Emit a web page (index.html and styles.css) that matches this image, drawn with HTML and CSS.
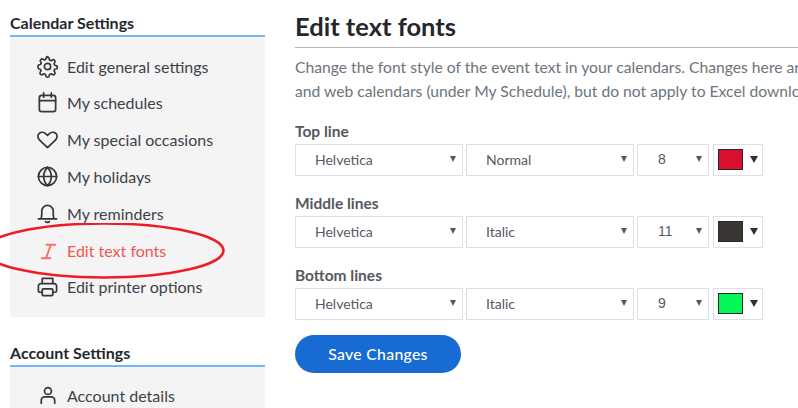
FILE: index.html
```html
<!DOCTYPE html>
<html lang="en">
<head>
<meta charset="utf-8">
<title>Edit text fonts</title>
<link rel="stylesheet" href="styles.css">
</head>
<body>
<div class="page">
  <aside class="sidebar">
    <h2 class="side-title">Calendar Settings</h2>
    <ul class="side-panel">
      <li class="side-item"><svg class="ico" viewBox="0 0 24 24"><path d="M12 2.5c1 0 1.600.4 1.800 1.300l.3 1.500 1.600.7 1.400-.8c.8-.5 1.500-.4 2.200.3.700.7.800 1.400.3 2.200l-.8 1.300.7 1.700 1.500.3c.9.2 1.300.8 1.300 1.800s-.4 1.600-1.300 1.800l-1.500.3-.7 1.700.8 1.300c.5.800.4 1.500-.3 2.200s-1.400.8-2.200.3l-1.400-.8-1.600.7-.3 1.500c-.2.900-.8 1.300-1.800 1.300s-1.600-.4-1.800-1.300l-.3-1.500-1.600-.7-1.400.8c-.8.500-1.500.4-2.200-.3s-.8-1.400-.3-2.200l.8-1.300-.7-1.700-1.500-.3C2.400 13.600 2 13 2 12s.4-1.600 1.300-1.800l1.500-.3.7-1.700-.8-1.300c-.5-.8-.4-1.500.3-2.200s1.400-.8 2.200-.3l1.400.8 1.600-.7.3-1.500c.2-.9.800-1.300 1.800-1.300z"/><circle cx="12" cy="12" r="3.300"/></svg><span>Edit general settings</span></li>
      <li class="side-item"><svg class="ico" viewBox="0 0 24 24"><rect x="3.500" y="4.500" width="17" height="17" rx="2.500"/><path d="M3.500 10h17M8 2v4.500M16 2v4.500"/></svg><span>My schedules</span></li>
      <li class="side-item"><svg class="ico" viewBox="0 0 24 24"><path d="M12 20.500 3.800 12.600C1.500 10.300 1.500 7.400 3.300 5.700c1.900-1.800 4.900-1.600 6.700.2L12 7.800l2-1.900c1.800-1.800 4.800-2 6.700-.2 1.800 1.700 1.800 4.600-.5 6.900z"/></svg><span>My special occasions</span></li>
      <li class="side-item"><svg class="ico" viewBox="0 0 24 24"><circle cx="12" cy="12" r="9.500"/><path d="M2.500 12h19M12 2.500c-5.300 5.500-5.300 13.500 0 19M12 2.500c5.300 5.500 5.300 13.500 0 19"/></svg><span>My holidays</span></li>
      <li class="side-item"><svg class="ico" viewBox="0 0 24 24"><path d="M2.500 17.500h19M5 17.500c.8-1.200 1-2.500 1-5V9.500a6 6 0 0 1 12 0v3c0 2.500.2 3.800 1 5M10 20.500c.8 1 3.200 1 4 0"/></svg><span>My reminders</span></li>
      <li class="side-item is-active"><svg class="ico" viewBox="0 0 24 24"><path d="M11 6h9M6 20h9M15.500 6 10.500 20"/></svg><span>Edit text fonts</span></li>
      <li class="side-item"><svg class="ico" viewBox="0 0 24 24"><path d="M6.500 9V3.500h11V9M6.500 18H4a1.500 1.500 0 0 1-1.500-1.500v-5A2.500 2.500 0 0 1 5 9h14a2.500 2.500 0 0 1 2.500 2.500v5A1.500 1.500 0 0 1 20 18h-2.500"/><rect x="6.500" y="14.500" width="11" height="7" rx="1"/></svg><span>Edit printer options</span></li>
    </ul>
    <h2 class="side-title side-title-next">Account Settings</h2>
    <ul class="side-panel side-panel-last">
      <li class="side-item"><svg class="ico" viewBox="0 0 24 24"><circle cx="12.500" cy="7.300" r="3.600"/><path d="M5.500 20v-3A3.500 3.500 0 0 1 9 13.500h7a3.500 3.500 0 0 1 3.500 3.500v3"/></svg><span>Account details</span></li>
    </ul>
  </aside>

  <main class="main">
    <h1 class="title">Edit text fonts</h1>
    <p class="intro">Change the font style of the event text in your calendars. Changes here are reflected in your printed<br>and web calendars (under My Schedule), but do not apply to Excel downloads of your calendars.</p>

    <section class="font-row">
      <h3 class="row-label">Top line</h3>
      <div class="controls">
        <div class="pick pick-face"><span>Helvetica</span></div>
        <div class="pick pick-style"><span>Normal</span></div>
        <div class="pick pick-size"><span>8</span></div>
        <div class="swatch-pick"><span class="swatch swatch-red"></span><span class="caret"></span></div>
      </div>
    </section>

    <section class="font-row">
      <h3 class="row-label">Middle lines</h3>
      <div class="controls">
        <div class="pick pick-face"><span>Helvetica</span></div>
        <div class="pick pick-style"><span>Italic</span></div>
        <div class="pick pick-size"><span>11</span></div>
        <div class="swatch-pick"><span class="swatch swatch-dark"></span><span class="caret"></span></div>
      </div>
    </section>

    <section class="font-row">
      <h3 class="row-label">Bottom lines</h3>
      <div class="controls">
        <div class="pick pick-face"><span>Helvetica</span></div>
        <div class="pick pick-style"><span>Italic</span></div>
        <div class="pick pick-size"><span>9</span></div>
        <div class="swatch-pick"><span class="swatch swatch-green"></span><span class="caret"></span></div>
      </div>
    </section>

    <button class="save" type="button">Save Changes</button>
  </main>

  <svg class="ring" viewBox="0 0 240 60" aria-hidden="true"><ellipse cx="104" cy="27.5" rx="119.500" ry="27"/></svg>
</div>
</body>
</html>
```
FILE: styles.css
```css
* { box-sizing: border-box; }
html, body { margin: 0; padding: 0; background: #fff; }
body { font-family: "Lato", "Liberation Sans", sans-serif; color: #33383d; }

.page {
  position: relative;
  display: flex;
  width: 798px;
  height: 408px;
  overflow: hidden;
  padding-left: 10px;
}

.sidebar { flex: 0 0 255px; padding-top: 13px; }

.side-title {
  margin: 0;
  height: 24px;
  font-size: 16px;
  line-height: 19px;
  font-weight: 700;
  color: #24292e;
  border-bottom: 2px solid #74b6f2;
}
.side-title-next { margin-top: 26px; }

.side-panel {
  list-style: none;
  margin: 0;
  padding: 11px 0 12px 26px;
  background: #f4f4f4;
  display: flex;
  flex-direction: column;
  height: 280px;
  justify-content: space-between;
}
.side-panel-last { height: 60px; padding-top: 10px; justify-content: flex-start; }

.side-item {
  display: flex;
  align-items: center;
  height: 36px;
  gap: 8px;
  font-size: 16px;
  color: #3d4248;
}
.ico {
  flex: 0 0 23px;
  width: 23px;
  height: 23px;
  fill: none;
  stroke: #33383d;
  stroke-width: 1.8;
  stroke-linecap: round;
  stroke-linejoin: round;
}
.is-active { color: #f0574f; }
.is-active .ico { stroke: #f4716a; stroke-width: 2; }

.main { flex: 1 0 0; min-width: 0; margin-left: 30px; padding-top: 11px; overflow: hidden; }

.title {
  margin: 0;
  height: 37px;
  font-size: 25.5px;
  line-height: 31px;
  font-weight: 700;
  color: #24272b;
  border-bottom: 1px solid #b4b4b4;
  white-space: nowrap;
}
.intro {
  margin: 7px 0 0;
  font-size: 15.7px;
  line-height: 24px;
  color: #6d747b;
  white-space: nowrap;
}

.font-row { height: 72px; }
.font-row:first-of-type { margin-top: 18px; }
.row-label {
  margin: 0;
  height: 23px;
  font-size: 15.5px;
  line-height: 21px;
  font-weight: 700;
  color: #55595e;
}

.controls { display: flex; gap: 3px; }

.pick, .swatch-pick {
  position: relative;
  display: flex;
  align-items: center;
  height: 32px;
  border: 1px solid #dfe0e6;
  background: #fff;
  font-size: 14px;
  color: #555a66;
}
.pick { padding-bottom: 2px; }
.pick-face, .pick-style { flex: 0 0 168px; padding-left: 19px; }
.pick-size {
  flex: 0 0 72px;
  padding-left: 20px;
  font-family: "Liberation Sans", sans-serif;
  font-size: 14px;
}
.pick::after {
  content: "";
  position: absolute;
  right: 6px;
  top: 11px;
  border-left: 3px solid transparent;
  border-right: 3px solid transparent;
  border-top: 6px solid #58585c;
}

.swatch-pick {
  flex: 0 0 50px;
  margin-left: 1px;
  padding-left: 4px;
  gap: 7px;
}
.swatch {
  width: 25px;
  height: 21px;
  margin-bottom: 1px;
  border: 1px solid #28282c;
}
.swatch-red { background: #d8112f; }
.swatch-dark { background: #3a3733; }
.swatch-green { background: #03f857; }
.caret {
  margin-bottom: 1px;
  border-left: 4px solid transparent;
  border-right: 4px solid transparent;
  border-top: 7px solid #33302c;
}

.save {
  display: block;
  width: 166px;
  height: 38px;
  margin-top: -2px;
  padding: 0 0 2px;
  border: 0;
  border-radius: 19px;
  background: #176bd3;
  color: #fff;
  font-family: inherit;
  font-size: 15.8px;
  font-weight: 500;
  letter-spacing: 0.3px;
}

.ring {
  position: absolute;
  left: 0;
  top: 223px;
  width: 240px;
  height: 60px;
  fill: none;
  stroke: #ee1c25;
  stroke-width: 2.5;
}
```
